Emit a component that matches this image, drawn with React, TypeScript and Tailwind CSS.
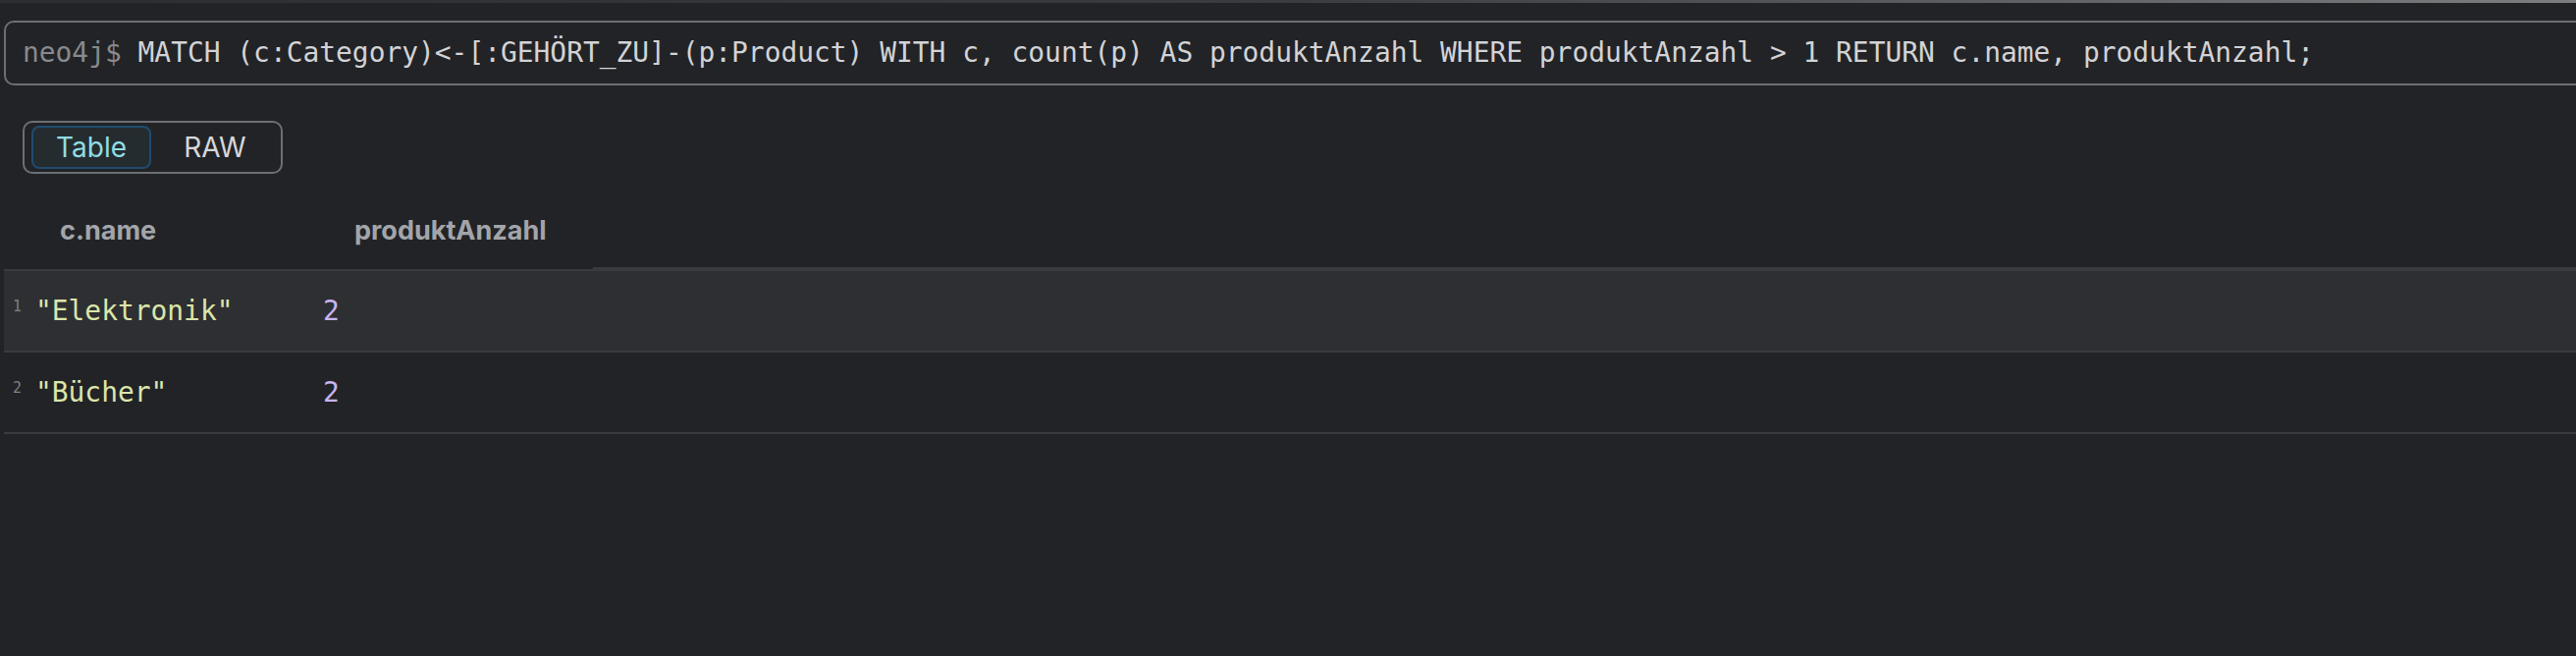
const mono = { fontFamily: '"DejaVu Sans Mono", "Liberation Mono", monospace' }

const rows = [
  { n: 1, name: '"Elektronik"', count: 2 },
  { n: 2, name: '"Bücher"', count: 2 },
]

export default function App() {
  return (
    <div className="w-full h-[668px] bg-[#222326] overflow-hidden font-['Inter',sans-serif]">
      {/* top strip */}
      <div className="h-[3px] bg-gradient-to-r from-[#2c2d30] via-[#3b3c3f] to-[#7d7e80]" />

      {/* query line */}
      <div className="mt-[18px] ml-[4px] mr-[-20px] h-[66px] border-2 border-[#6c6f75] rounded-[10px] flex items-center pl-[17px]">
        <span className="text-[27.9px] whitespace-pre leading-none" style={mono}>
          <span className="text-[#878a8f]">neo4j$ </span>
          <span className="text-[#d2d3d6]">
            MATCH (c:Category)&lt;-[:GEHÖRT_ZU]-(p:Product) WITH c, count(p) AS produktAnzahl WHERE produktAnzahl &gt; 1 RETURN c.name, produktAnzahl;
          </span>
        </span>
      </div>

      {/* view toggle */}
      <div className="mt-[36px] ml-[23px] w-[265px] h-[54px] border-2 border-[#6c6f75] rounded-[10px] flex items-center pl-[7px] pr-[2px]">
        <div className="w-[122px] h-[44px] border-2 border-[#1f4c70] bg-[#252c30] rounded-[8px] flex items-center justify-center text-[28px] text-[#8fdde3]">
          Table
        </div>
        <div className="flex-1 flex items-center justify-center text-[28px] text-[#d6d7d9]">RAW</div>
      </div>

      {/* result table */}
      <div className="mt-[19px] ml-[4px]">
        <div className="flex items-end">
          <div className="w-[300px] h-[80px] border-b-2 border-[#3a3b40] flex items-center pl-[57px] text-[27px] font-bold text-[#a3a5aa]">
            c.name
          </div>
          <div className="w-[300px] h-[80px] border-b-2 border-[#3a3b40] flex items-center pl-[57px] text-[27px] font-bold text-[#a3a5aa]">
            produktAnzahl
          </div>
          <div className="flex-1 h-[4px] bg-[#3a3b40]" />
        </div>

        {rows.map((r, i) => (
          <div
            key={r.n}
            className={`flex h-[83px] border-b-2 border-[#3a3b40] ${i === 0 ? 'bg-[#2e2f32]' : ''}`}
          >
            <div className="w-[300px] flex items-center pl-[9px]">
              <span className="w-[23px] text-[15px] text-[#7d8086] leading-none self-start mt-[29px]" style={mono}>
                {r.n}
              </span>
              <span className="text-[27.9px] text-[#dce5aa] leading-none" style={mono}>
                {r.name}
              </span>
            </div>
            <div className="flex items-center pl-[25px]">
              <span className="text-[27.9px] text-[#c7b4f0] leading-none" style={mono}>
                {r.count}
              </span>
            </div>
          </div>
        ))}
      </div>
    </div>
  )
}
